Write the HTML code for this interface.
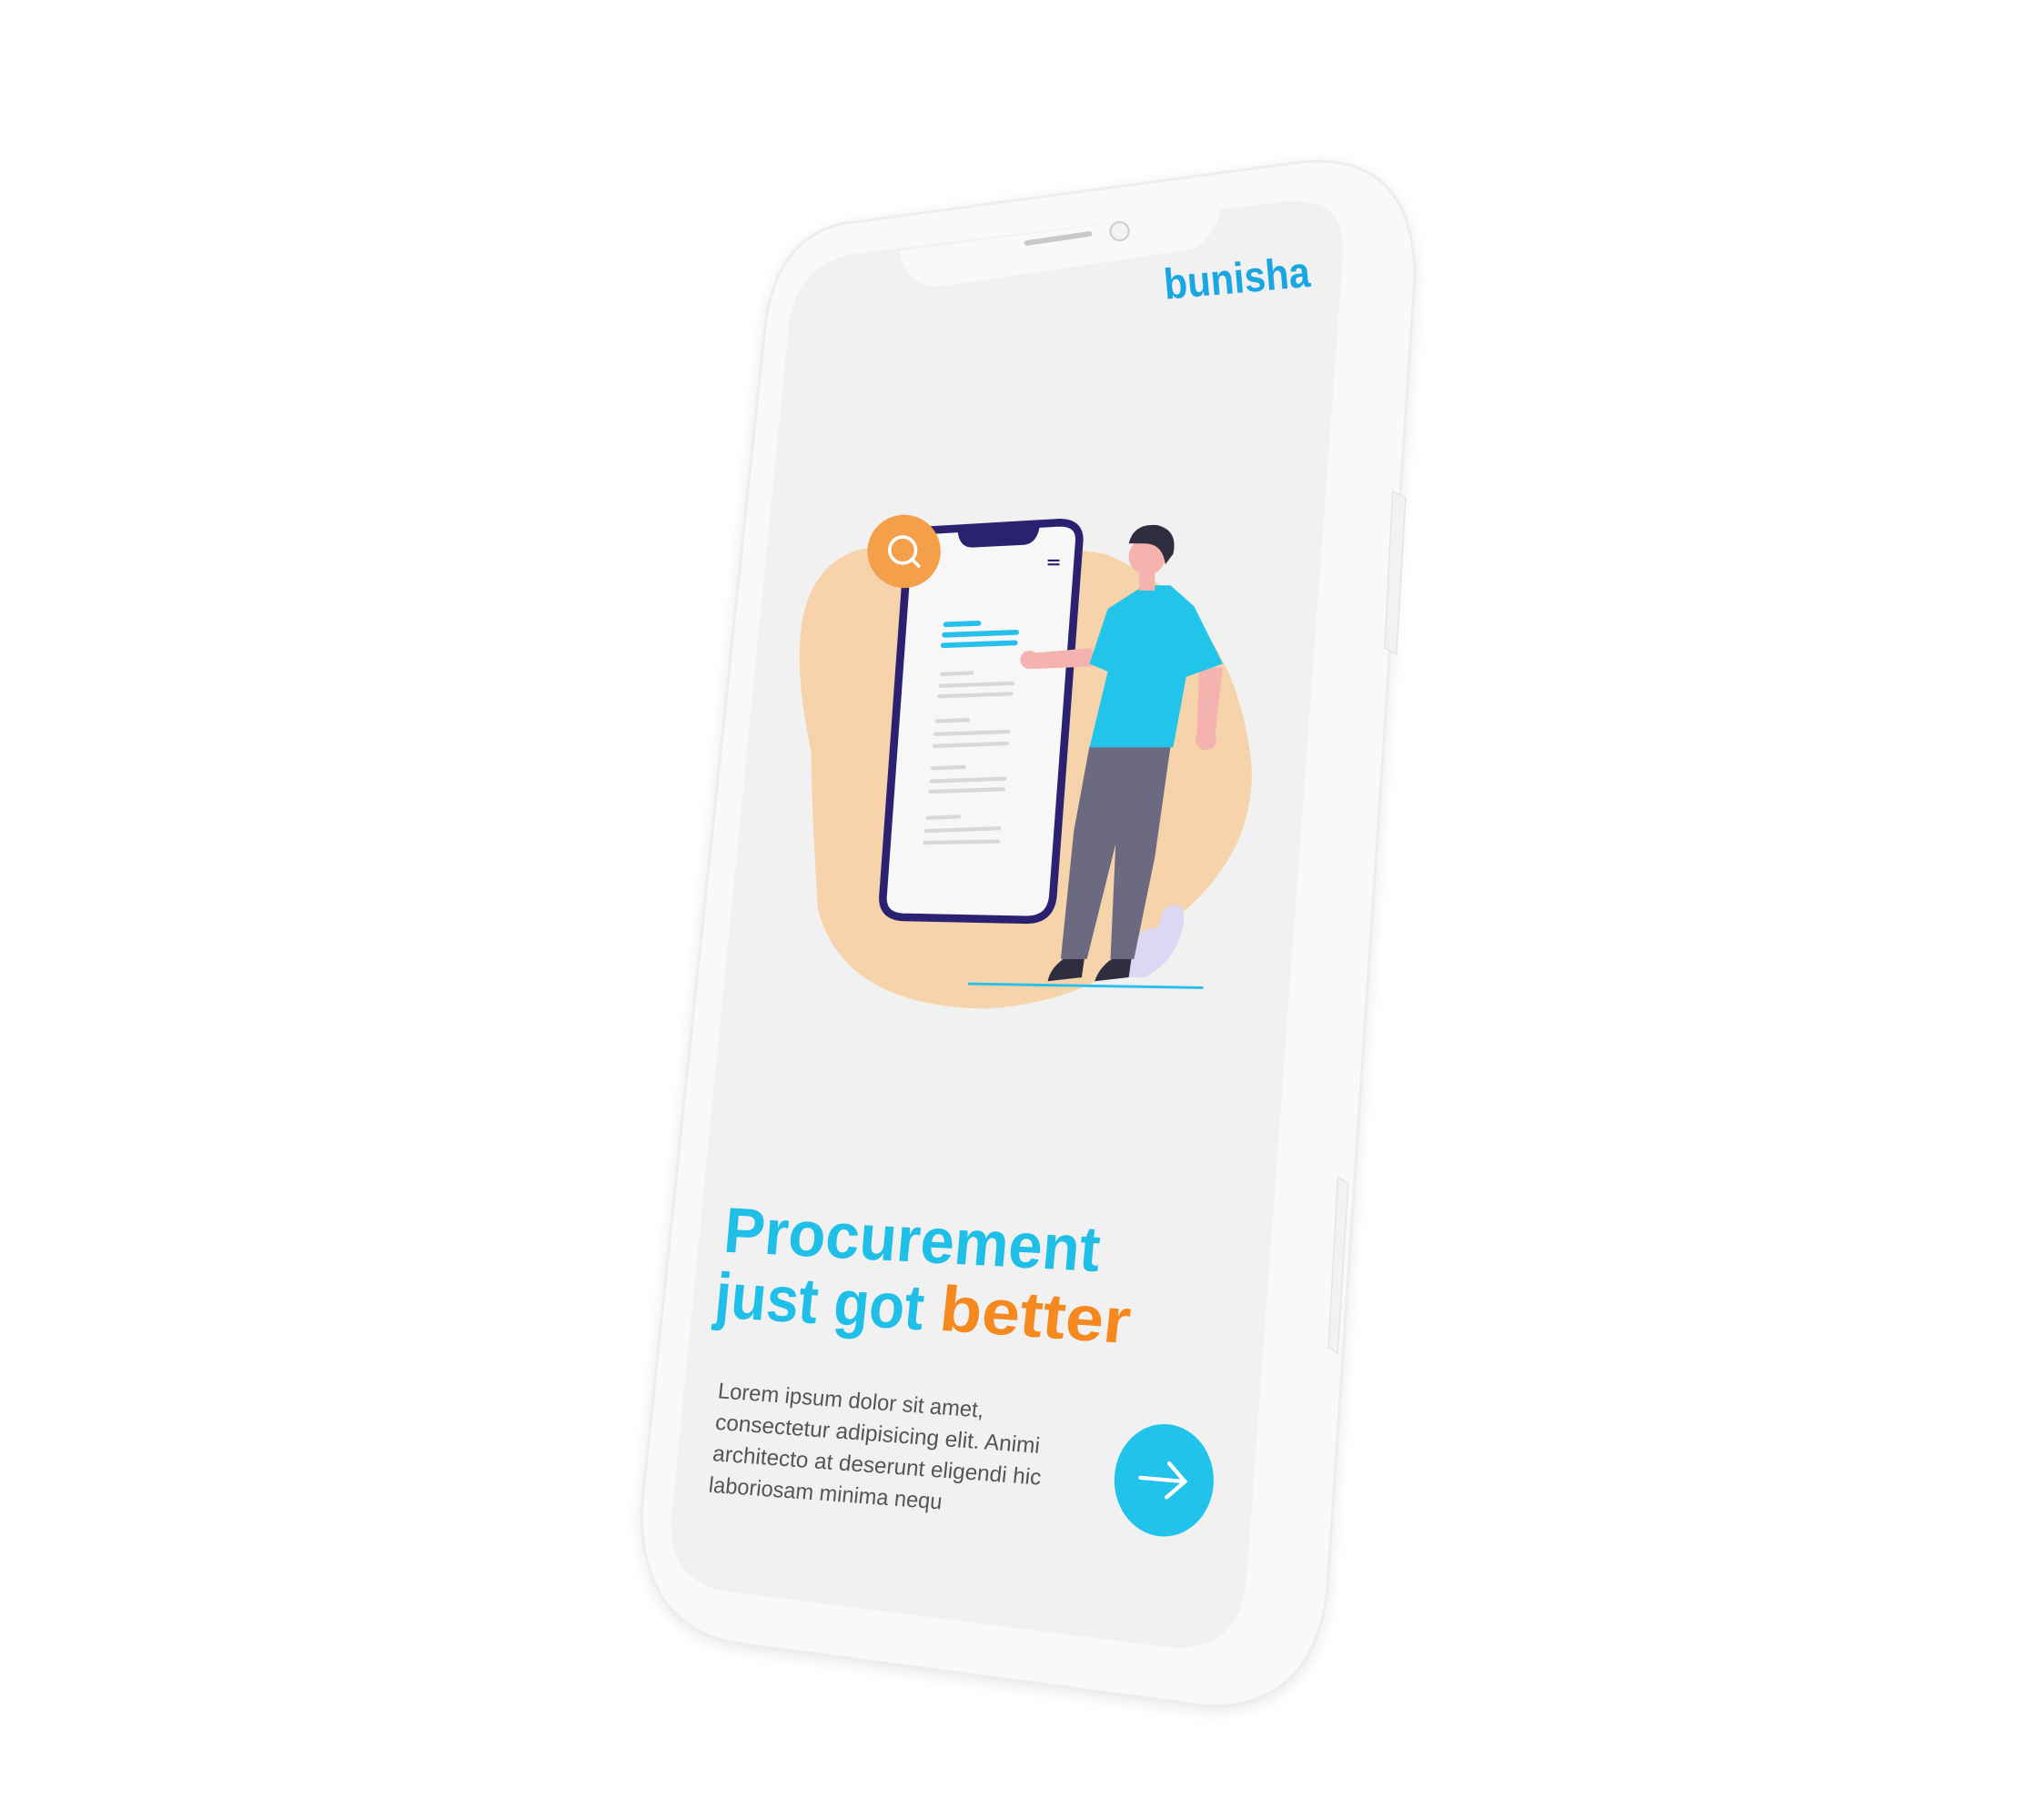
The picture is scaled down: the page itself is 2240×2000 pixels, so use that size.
<!DOCTYPE html>
<html><head><meta charset="utf-8"><style>
html,body{margin:0;padding:0;background:#fff;}
svg{display:block;}
</style></head><body>
<svg width="2240" height="2000" viewBox="0 0 1560 1393" xmlns="http://www.w3.org/2000/svg">
<defs>
<filter id="sh" x="-20%" y="-20%" width="140%" height="140%"><feGaussianBlur stdDeviation="6"/></filter>
</defs>
<rect width="1560" height="1393" fill="#fff"/>
<g transform="translate(-4,-4)">
<path d="M 650,178 L 1000,131 Q 1085,123 1087,218 L 1020,1223 Q 1010,1313 930,1313 L 570,1265 Q 495,1253 495,1163 L 590,253 Q 600,188 650,178 Z" fill="#e6e6e6" filter="url(#sh)"/>
<path d="M 650,175 L 1000,128 Q 1085,120 1087,215 L 1020,1220 Q 1010,1310 930,1310 L 570,1262 Q 495,1250 495,1160 L 590,250 Q 600,185 650,175 Z" fill="#f9f9f9" stroke="#ededed" stroke-width="2"/>
<path d="M 1070,380 L 1080,385 L 1073,505 L 1064,500 Z" fill="#f2f2f2" stroke="#e4e4e4"/>
<path d="M 1028,905 L 1036,910 L 1028,1040 L 1021,1035 Z" fill="#f2f2f2" stroke="#e4e4e4"/>
<path d="M 660,198 L 990,158 Q 1035,155 1032,200 L 958,1215 Q 952,1268 900,1265 L 560,1222 Q 515,1215 518,1165 L 608,250 Q 615,205 660,198 Z" fill="#f1f1f1"/>
<path d="M 693,196 L 938,164 Q 932,192 910,196 L 725,223 Q 698,226 693,196 Z" fill="#f9f9f9"/>
<line x1="790" y1="190" x2="838" y2="183" stroke="#c9c9c9" stroke-width="4" stroke-linecap="round"/>
<circle cx="861" cy="181" r="7" fill="#f3f3f3" stroke="#cfcfcf" stroke-width="1.5"/>
<text transform="translate(896,233) rotate(-5)" font-family="Liberation Sans, sans-serif" font-size="33" font-weight="bold" fill="#1aa6e3" textLength="112" lengthAdjust="spacingAndGlyphs">bunisha</text>
<path d="M 660,425 Q 740,410 800,420 L 850,428 Q 950,470 962,590 Q 965,660 900,710 Q 850,770 760,776 Q 650,775 630,700 Q 625,620 625,580 Q 610,510 620,470 Q 630,435 660,425 Z" fill="#f6d3aa"/>
<path d="M 712,410 L 815,404 Q 832,404 830,420 L 810,690 Q 808,708 790,708 L 695,706 Q 678,705 680,688 L 699,425 Q 700,411 712,410 Z" fill="#f7f7f7" stroke="#2a2270" stroke-width="6"/>
<path d="M 737,410 L 800,406 Q 798,420 788,421 L 748,423 Q 738,423 737,410 Z" fill="#2a2270"/>
<g stroke="#2a2270" stroke-width="1.5"><line x1="806" y1="433" x2="815" y2="433"/><line x1="806" y1="436" x2="815" y2="436"/></g>
<g stroke="#27c0ec" stroke-width="4" stroke-linecap="round"><line x1="728" y1="482" x2="753" y2="481"/><line x1="727" y1="490" x2="782" y2="488"/><line x1="726" y1="498" x2="781" y2="496"/></g>
<g stroke="#d8d8d8" stroke-width="3" stroke-linecap="round">
<line x1="725" y1="520" x2="748" y2="519"/><line x1="724" y1="529" x2="779" y2="527"/><line x1="723" y1="537" x2="778" y2="535"/>
<line x1="721" y1="556" x2="745" y2="555"/><line x1="720" y1="566" x2="776" y2="564"/><line x1="719" y1="575" x2="775" y2="573"/>
<line x1="718" y1="592" x2="742" y2="591"/><line x1="717" y1="602" x2="773" y2="600"/><line x1="716" y1="610" x2="772" y2="608"/>
<line x1="714" y1="630" x2="738" y2="629"/><line x1="713" y1="640" x2="769" y2="638"/><line x1="712" y1="649" x2="768" y2="648"/>
</g>
<circle cx="696" cy="426" r="28" fill="#f4a04a"/>
<circle cx="695" cy="425" r="10" fill="none" stroke="#fff" stroke-width="2.5"/>
<line x1="702" y1="432" x2="708" y2="438" stroke="#fff" stroke-width="2.5"/>
<path d="M 868,752 Q 870,710 890,715 L 895,700 Q 912,690 910,710 Q 905,740 880,752 Z" fill="#dcd7f4"/>
<path d="M 838,575 L 900,575 L 888,660 L 872,738 L 854,738 L 858,650 L 836,738 L 816,738 L 826,640 Z" fill="#6b6a80"/>
<path d="M 818,738 L 834,738 L 832,752 L 806,755 Q 808,745 818,738 Z" fill="#2f2e41"/>
<path d="M 855,738 L 870,738 L 868,752 L 842,755 Q 845,745 855,738 Z" fill="#2f2e41"/>
<path d="M 792,504 L 840,500 L 842,514 L 794,516 Z" fill="#f5b3b0"/>
<circle cx="792" cy="509" r="7" fill="#f5b3b0"/>
<path d="M 922,515 L 940,515 L 934,568 L 920,568 Z" fill="#f5b3b0"/>
<circle cx="927" cy="570" r="8" fill="#f5b3b0"/>
<path d="M 852,470 L 880,452 L 900,452 L 918,468 L 940,512 L 912,522 L 902,576 L 838,576 L 852,518 L 838,512 Z" fill="#22c4ea"/>
<rect x="876" y="440" width="12" height="16" fill="#f5b3b0"/>
<circle cx="882" cy="430" r="14" fill="#f5b3b0"/>
<path d="M 868,420 Q 872,404 890,406 Q 906,410 902,428 L 896,436 Q 894,420 880,420 Z" fill="#2f2e41"/>
<line x1="745" y1="757" x2="925" y2="760" stroke="#27c0ec" stroke-width="2"/>
<g font-family="Liberation Sans, sans-serif" font-weight="700" font-size="49">
<text transform="translate(557,962) rotate(3) skewX(-2)" fill="#1fbfe8" textLength="288" lengthAdjust="spacingAndGlyphs">Procurement</text>
<text transform="translate(550,1012) rotate(3.5) skewX(-2)" fill="#1fbfe8" textLength="160" lengthAdjust="spacingAndGlyphs">just got</text>
<text transform="translate(722,1022) rotate(4) skewX(-2)" fill="#f5891f" textLength="146" lengthAdjust="spacingAndGlyphs">better</text>
</g>
<g font-family="Liberation Sans, sans-serif" font-size="17" fill="#555">
<text transform="translate(553,1074) rotate(4.2) skewX(-2)" textLength="204" lengthAdjust="spacingAndGlyphs">Lorem ipsum dolor sit amet,</text>
<text transform="translate(551,1098) rotate(4.2) skewX(-2)" textLength="249" lengthAdjust="spacingAndGlyphs">consectetur adipisicing elit. Animi</text>
<text transform="translate(549,1122) rotate(4.2) skewX(-2)" textLength="252" lengthAdjust="spacingAndGlyphs">architecto at deserunt eligendi hic</text>
<text transform="translate(546,1146) rotate(4.2) skewX(-2)" textLength="179" lengthAdjust="spacingAndGlyphs">laboriosam minima nequ</text>
</g>
<ellipse cx="895" cy="1137" rx="38" ry="43" fill="#22c3ea"/>
<g stroke="#fff" stroke-width="3" fill="none" stroke-linecap="round"><line x1="877" y1="1135" x2="911" y2="1138"/><path d="M 899,1124 L 911,1138 L 897,1150"/></g>
</g>
</svg>
</body></html>
